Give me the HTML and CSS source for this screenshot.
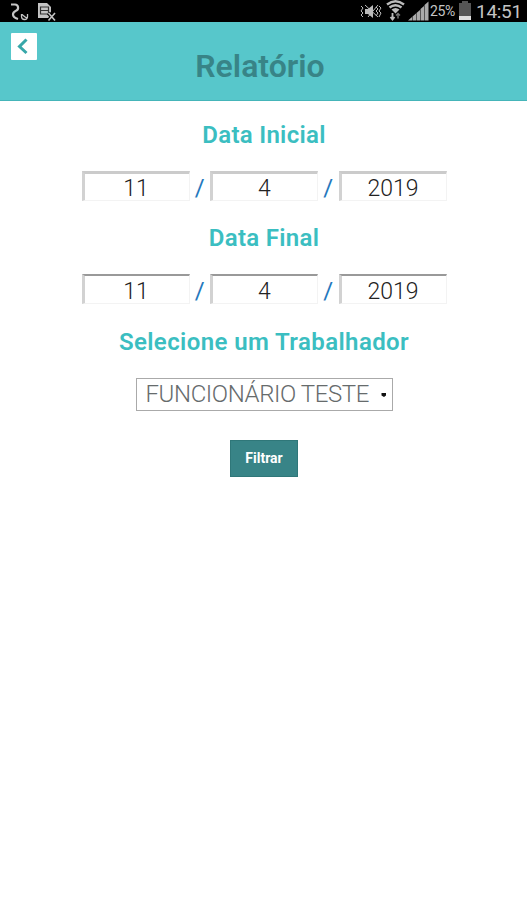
FILE: index.html
```html
<!DOCTYPE html>
<html lang="pt-BR">

<head>
    <meta charset="UTF-8">
    <meta name="viewport" content="width=device-width, initial-scale=1.0">
    <title>Relatório</title>
    <link rel="stylesheet" href="styles.css">
</head>

<body>
    <div class="status">
        <svg class="avisos" width="60" height="22" viewBox="0 0 60 22" fill="none" stroke="#c4c4c4">
            <path d="M11 4.500h4a3.200 3.200 0 0 1 1 6.200q-3 1.300-3 3.800 0 3 5 4.500" stroke-width="2.200" />
            <path d="M21.500 14v2.500a3 3 0 0 0 6 0V14M22 14.500l5 4" stroke-width="1.300" />
            <path d="M38 3h9l4 4v11h-13z" fill="#c4c4c4" stroke="none" />
            <path d="M40.500 7h8v7h-8zM40.500 10.500h8" stroke="#333" stroke-width="1.200" />
            <path d="M48.500 13l6.500 7.500M55 13l-6.500 7.500" stroke="#000" stroke-width="4" />
            <path d="M48.500 13l6.500 7.500M55 13l-6.500 7.500" stroke-width="1.600" />
        </svg>
        <div class="sistema">
            <svg width="70" height="22" viewBox="358 0 70 22" fill="none" stroke="#bbb">
                <path d="M364 9h3l5-4v13l-5-4h-3z" fill="#bbb" stroke="none" />
                <path d="M360 6l2 2-2 3 2 2-2 2 2 2M364 5l13 12M377 5l-10 12M375 7l2 2-2 2 2 2-2 3M378 6l2 2-2 3 2 2-2 4" />
                <path d="M386 4.500q8.500-6.500 17 0M388.500 7.500q6-4.500 12 0" stroke-width="2.400" />
                <path d="M390.500 9.500q4-3 8 0l-4 4z" fill="#bbb" stroke="none" />
                <path d="M391.500 13v6M389.500 17l2 2.500 2-2.500" stroke-width="1.800" />
                <path d="M397 18.500v-5M395 15.500l2-2 2 2" stroke="#777" stroke-width="1.400" />
                <path d="M407 20.500l4-3.500v3.500zM411.500 16.500l3.500-3v7h-3.500zM415.500 13l3.500-3v10.500h-3.500zM419.500 9l3.500-3v14.500h-3.500zM423.500 5l4-3.500v19h-4z" fill="#aaa" stroke="none" />
            </svg>
            <span class="bateria">25%</span>
            <svg width="14" height="22" viewBox="0 0 14 22">
                <path d="M4 1h6v2h3v17H1V3h3z" fill="#555" />
                <path d="M1 16h12v4H1z" fill="#ddd" />
            </svg>
            <span class="hora">14:51</span>
        </div>
    </div>

    <header class="cabecalho">
        <button class="voltar" type="button" aria-label="Voltar">
            <svg width="26" height="27" viewBox="0 0 26 27" fill="none" stroke="#37a7a9" stroke-width="3">
                <path d="M15.500 6.500L8.500 13.500l7 6.500" />
            </svg>
        </button>
        <h1>Relatório</h1>
    </header>

    <form class="filtro">
        <h2>Data Inicial</h2>
        <div class="data">
            <input type="text" value="11">
            <span>/</span>
            <input type="text" value="4">
            <span>/</span>
            <input type="text" value="2019">
        </div>

        <h2>Data Final</h2>
        <div class="data data-final">
            <input type="text" value="11">
            <span>/</span>
            <input type="text" value="4">
            <span>/</span>
            <input type="text" value="2019">
        </div>

        <h2 class="longo">Selecione um Trabalhador</h2>
        <div class="trabalhador">
            <select>
                <option selected>FUNCIONÁRIO TESTE</option>
            </select>
            <svg width="6" height="6" viewBox="0 0 6 6">
                <path d="M0.500 1h4.500v2.500L3 5 0.500 3.500z" fill="#111" />
            </svg>
        </div>

        <button class="filtrar" type="button">Filtrar</button>
    </form>
</body>

</html>
```
FILE: styles.css
```css
body {
    margin: 0;
    background-color: #fff;
    font-family: Roboto, sans-serif;
}

h1,
h2 {
    margin: 0;
}

.status {
    display: flex;
    justify-content: space-between;
    height: 22px;
    background-color: #000;
    color: #c4c4c4;
}

.sistema {
    display: flex;
    line-height: 23px;
}

.bateria {
    width: 28px;
    margin-left: 1px;
    font-size: 14px;
    letter-spacing: -0.4px;
}

.hora {
    width: 51px;
    padding-left: 4px;
    font-size: 19px;
    letter-spacing: -0.3px;
}

.cabecalho {
    display: grid;
    grid-template-columns: 26px 1fr 34px;
    box-sizing: border-box;
    height: 79px;
    padding: 11px 10px 0 11px;
    background-color: #57c7cb;
    border-bottom: 1px solid #45b5b9;
}

.voltar {
    width: 26px;
    height: 27px;
    padding: 0;
    background-color: #fff;
    border: none;
    border-radius: 1px;
}

.voltar svg {
    display: block;
}

.cabecalho h1 {
    padding-top: 14px;
    color: #388487;
    font-size: 32px;
    font-weight: 600;
    line-height: 38px;
    text-align: center;
}

.filtro {
    display: flex;
    flex-direction: column;
    align-items: center;
    padding: 19px 0 0 1px;
}

.filtro h2 {
    height: 30px;
    color: #3bbec1;
    font-size: 24px;
    font-weight: 600;
    letter-spacing: 0.3px;
    line-height: 30px;
}

.filtro .longo {
    letter-spacing: 0.4px;
}

.data {
    display: flex;
    width: 365px;
    height: 30px;
    margin: 21px 0 22px;
}

.data input {
    box-sizing: border-box;
    width: 108px;
    height: 30px;
    padding: 3px 0 0;
    background-color: #fff;
    border: 1px solid #f3f3f3;
    border-top: 3px solid #cbcbcb;
    border-left: 3px solid #d2d2d2;
    border-radius: 0;
    color: #222;
    font-family: Roboto, sans-serif;
    font-size: 23px;
    font-weight: 350;
    text-align: center;
    text-indent: -1px;
}

.data-final {
    margin-bottom: 23px;
}

.data-final input {
    border-top: 2px solid #999;
}

.data span {
    flex: 1;
    color: #2578bd;
    font-size: 24px;
    line-height: 34px;
    text-align: center;
}

.trabalhador {
    display: flex;
    align-items: center;
    box-sizing: border-box;
    width: 257px;
    height: 33px;
    margin: 21px 0 29px;
    border: 1px solid #aaa;
}

.trabalhador select {
    width: 244px;
    height: 31px;
    padding: 0 0 2px 9px;
    appearance: none;
    background: none;
    border: none;
    color: #666b6c;
    font-family: Roboto, sans-serif;
    font-size: 24px;
    font-weight: 300;
    letter-spacing: -0.4px;
}

.filtrar {
    width: 68px;
    height: 37px;
    padding: 0 0 2px;
    background-color: #388487;
    border: 1px solid #2f7779;
    color: #fff;
    font-family: Roboto, sans-serif;
    font-size: 14px;
    font-weight: bold;
}
```
